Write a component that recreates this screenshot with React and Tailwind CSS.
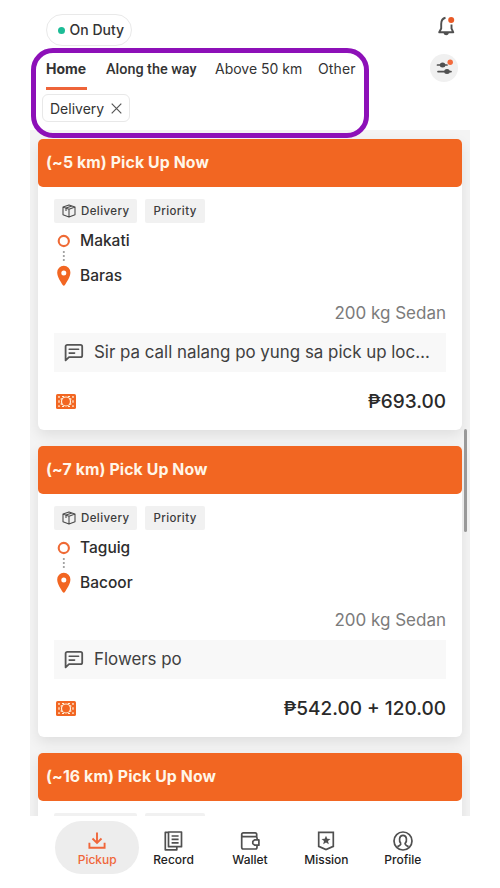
import { clsx } from "clsx";

const ORDERS = [
  { distance: 5, from: "Makati", to: "Baras", note: "Sir pa call nalang po yung sa pick up loc…", price: "₱693.00" },
  { distance: 7, from: "Taguig", to: "Bacoor", note: "Flowers po", price: "₱542.00 + 120.00" },
  { distance: 16 },
];

function BellIcon() {
  return (
    <svg width="20" height="22" viewBox="0 0 20 22" fill="none" aria-hidden="true">
      <path d="M9.5 2.8C6.4 3.5 5.2 5.8 5.2 9v4.5L3.2 17.3h14.1L15.5 13.5V9.6" stroke="#505050" strokeWidth="1.9" strokeLinejoin="round" />
      <path d="M7.6 18h5.2c-.3 1.600-1.300 2.200-2.600 2.200s-2.300-.6-2.600-2.200z" fill="#505050" />
      <circle cx="15.2" cy="5" r="3" fill="#e95a26" />
    </svg>
  );
}

function FilterIcon() {
  return (
    <svg width="28" height="28" viewBox="0 0 28 28" fill="none" aria-hidden="true">
      <path d="M7.5 11H17M8 17.6h13" stroke="#505050" strokeWidth="1.7" strokeLinecap="round" />
      <ellipse cx="12.6" cy="11" rx="2.8" ry="2.5" fill="#505050" />
      <ellipse cx="17" cy="17.6" rx="2.8" ry="2.5" fill="#505050" />
      <circle cx="20.2" cy="8.3" r="2.7" fill="#f26a3c" />
    </svg>
  );
}

function BoxIcon() {
  return (
    <svg width="14" height="14" viewBox="0 0 14 14" fill="none" stroke="#4b4b4b" strokeWidth="1.1" strokeLinejoin="round" className="-mt-0.5" aria-hidden="true">
      <path d="M7 .9 13 3v7.800L7 13.100 1 10.800V3zM1 3l6 2.200L13 3M7 5.200v7.900M10 1.900 4 4.100v2.900" />
    </svg>
  );
}

function RouteIcon() {
  return (
    <svg width="20" height="70" viewBox="0 0 20 70" fill="none" aria-hidden="true">
      <circle cx="9.8" cy="18" r="5.1" stroke="#ef6a35" strokeWidth="2.1" />
      <path d="M9.8 28v2M9.8 32v2M9.8 36v2" stroke="#a3a3a3" strokeWidth="1.8" />
      <path d="M9.8 42.8a6.6 6.6 0 0 0-6.6 6.7c0 4.7 3.9 9.7 5.5 12.6.5.9 1.7.9 2.2 0 1.6-2.9 5.5-7.9 5.5-12.6a6.6 6.6 0 0 0-6.6-6.7z" fill="#f26622" />
      <circle cx="9.8" cy="50" r="2.5" fill="#fff" />
    </svg>
  );
}

function NoteIcon() {
  return (
    <svg width="20" height="20" viewBox="0 0 20 20" fill="none" stroke="#555" strokeWidth="1.8" aria-hidden="true">
      <path d="M1.600 17.400V3.600c0-1 .7-1.700 1.700-1.700h13.200c1 0 1.700.7 1.700 1.700v8.800c0 1-.7 1.700-1.700 1.700H5z" strokeLinejoin="round" />
      <path d="M5.200 6.300h9.400M5.200 10.100h5.400" strokeLinecap="round" strokeWidth="1.6" />
    </svg>
  );
}

function CashIcon() {
  return (
    <svg width="20" height="15" viewBox="0 0 20 15" fill="none" aria-hidden="true">
      <rect width="20" height="15" rx="1.6" fill="#f26622" />
      <circle cx="10" cy="7.5" r="4.500" stroke="#fff3df" strokeWidth="1.2" />
      <path d="M6.400 4.600 4.600 5.300M6.400 10.400l-1.800-.7M13.600 4.600l1.800.7M13.600 10.400l1.800-.7M3 6.300v2.400M17 6.300v2.400M6 2.500h2M12 2.500h2M6 12.500h2M12 12.500h2" stroke="#fff3df" strokeWidth="1.200" />
      <g fill="#fff3df">
        <circle cx="3" cy="2.9" r=".9" />
        <circle cx="17" cy="2.9" r=".9" />
        <circle cx="3" cy="12.1" r=".9" />
        <circle cx="17" cy="12.1" r=".9" />
      </g>
    </svg>
  );
}

function NavIcon({ name }) {
  return (
    <svg width="22" height="22" viewBox="0 0 22 22" fill="none" stroke="currentColor" strokeWidth="1.7" aria-hidden="true">
      {name === "Pickup" && <path d="M11 2.500v10M6.500 8.500l4.500 4.400 4.500-4.400M3.400 12.700v5h15.200v-5" strokeWidth="1.9" />}
      {name === "Record" && (
        <>
          <path d="M5.500 2H18.500v14.700H5.500zM5.500 2.300H2.300v17.500h11.500v-3" strokeLinejoin="round" />
          <path d="M8.600 6h7M8.600 9.400h7M8.600 12.800h7" />
        </>
      )}
      {name === "Wallet" && (
        <path d="M17.700 6.600V4.500c0-1-.5-1.600-1.500-1.600H4.300c-1 0-1.600.6-1.600 1.600v12.800c0 1 .7 1.700 1.700 1.700h12c1 0 1.600-.7 1.600-1.700v-1.900M2.800 5.200c0 1 .6 1.500 1.600 1.500h12.200c1 0 1.500.6 1.500 1.600v1.500M15.600 9.900h4.300v5.300h-4.300l-1.800-1.500v-2.300z" strokeLinejoin="round" />
      )}
      {name === "Mission" && (
        <>
          <path d="M3.700 2.400h14.600v14L11 19.500l-7.300-3.100z" />
          <path d="m11 5.700 1.300 3 3.200.2-2.500 2.100.8 3.200-2.800-1.700-2.800 1.700.8-3.200-2.500-2.100 3.200-.2z" fill="currentColor" stroke="none" />
        </>
      )}
      {name === "Profile" && (
        <>
          <circle cx="11" cy="11" r="9" />
          <path d="M8.900 13.500C6.900 11.800 6.700 5.300 11 5.300s4.100 6.500 2.100 8.200c0 1.700 1 2.100 3.500 3.200M8.900 13.500c0 1.700-1 2.100-3.500 3.200" />
        </>
      )}
    </svg>
  );
}

function Tag({ children }) {
  return (
    <span className="flex h-6 items-center gap-[5px] rounded-xs bg-[#f1f1f1] px-2 pt-0.5 text-[11.5px] font-medium tracking-[0.4px] text-[#3c3c3c]">
      {children}
    </span>
  );
}

function OrderCard({ order }) {
  return (
    <article className="h-[291px] shrink-0 rounded-md bg-white shadow-[0_5px_14px_rgba(0,0,0,0.09)]">
      <h2 className="flex h-12 items-center rounded-[5px] bg-[#f26622] pl-2 text-[15.8px] font-bold tracking-[0.12px] text-[#fff6e8]">
        (~{order.distance} km) Pick Up Now
      </h2>
      <div className="px-4 pt-3">
        <div className="flex gap-2">
          <Tag>
            <BoxIcon />
            Delivery
          </Tag>
          <Tag>Priority</Tag>
        </div>
        {order.from && (
          <>
            <div className="flex gap-1.5">
              <RouteIcon />
              <div className="text-[15.5px] leading-[35px] font-medium text-[#2d2d2d]">
                <p className="h-[35px]">{order.from}</p>
                <p className="h-[35px]">{order.to}</p>
              </div>
            </div>
            <p className="h-10 text-right text-[17px] leading-[41px] text-[#7b7b7b]">200 kg Sedan</p>
            <div className="flex h-[39px] items-center gap-[10px] bg-[#f8f8f8] pl-[10px] text-[16.9px] text-[#404040]">
              <NoteIcon />
              <span className="whitespace-nowrap">{order.note}</span>
            </div>
            <div className="flex h-[58px] items-center justify-between pl-0.5">
              <CashIcon />
              <span className="pt-[3px] text-[19px] font-medium text-[#2a2a2a]">{order.price}</span>
            </div>
          </>
        )}
      </div>
    </article>
  );
}

function Header() {
  return (
    <header className="flex h-[130px] justify-between px-[42px]">
      <div>
        <div className="mt-[14px] ml-1 flex h-8 w-[86px] items-center gap-[5px] rounded-full border border-[#e9e9e9] pl-[10.500px] text-sm font-medium text-[#333]">
          <span className="size-[7px] shrink-0 rounded-full bg-[#1cbc96]" />
          <span className="whitespace-nowrap">On Duty</span>
        </div>
        <nav className="ml-1 flex h-11 items-start pt-3 text-sm leading-[22px] text-[#333]">
          <span className="h-8 w-[41px] border-b-3 border-[#ee6439] font-bold">Home</span>
          <span className="mt-px ml-[19px] w-[90px] font-[Roboto] text-[14.4px] font-medium whitespace-nowrap">Along the way</span>
          <span className="ml-[19px] w-[88px] whitespace-nowrap">Above 50 km</span>
          <span className="ml-[15px] tracking-[0.15px]">Other</span>
        </nav>
        <button type="button" className="mt-1 flex h-7 w-[88px] items-center gap-[7px] rounded-md border border-[#e8e8e8] pt-px pl-[7px] text-sm text-[#333]">
          Delivery
          <svg width="11" height="11" viewBox="0 0 11 11" stroke="#555" strokeWidth="1.2" className="-mt-px" aria-hidden="true">
            <path d="m.7.7 9.6 9.6M10.3.7.7 10.3" />
          </svg>
        </button>
      </div>
      <div className="flex w-7 flex-col items-center pt-[15px]">
        <div className="pl-[3px]">
          <BellIcon />
        </div>
        <div className="mt-[17px] size-7 rounded-full bg-[#f0f0f0]">
          <FilterIcon />
        </div>
      </div>
    </header>
  );
}

function BottomNav() {
  const tabs = ["Pickup", "Record", "Wallet", "Mission", "Profile"];
  return (
    <nav className="grid h-[72px] grid-cols-5 bg-white px-[59px] pt-[5px]">
      {tabs.map((tab) => (
        <div
          key={tab}
          className={clsx(
            "-mx-1 flex h-[53px] flex-col items-center rounded-full pt-[9px] text-xs leading-[16px] font-medium",
            tab === "Pickup" && "bg-[#ededed] text-[#f0663a]"
          )}
        >
          <span className={clsx("h-[22px]", tab !== "Pickup" && "text-[#505050]")}>
            <NavIcon name={tab} />
          </span>
          {tab}
        </div>
      ))}
    </nav>
  );
}

export default function App() {
  return (
    <div className="relative flex h-[888px] w-[500px] flex-col overflow-hidden bg-white font-[Inter,sans-serif] text-[#222]">
      <Header />
      <main className="relative mx-[30px] flex h-[686px] flex-col gap-4 overflow-hidden bg-[#f4f4f4] px-2 pt-[9px]">
        {ORDERS.map((order) => (
          <OrderCard key={order.distance} order={order} />
        ))}
        {/* Scroll thumb */}
        <span className="absolute top-[299px] right-[3px] h-[103px] w-[3px] rounded-full bg-[#999]" />
      </main>
      <BottomNav />
      {/* Highlight around the filter tabs */}
      <div className="pointer-events-none absolute top-12 left-[31px] h-[90px] w-[338px] rounded-[22px] border-5 border-[#8d10b8]" />
    </div>
  );
}
